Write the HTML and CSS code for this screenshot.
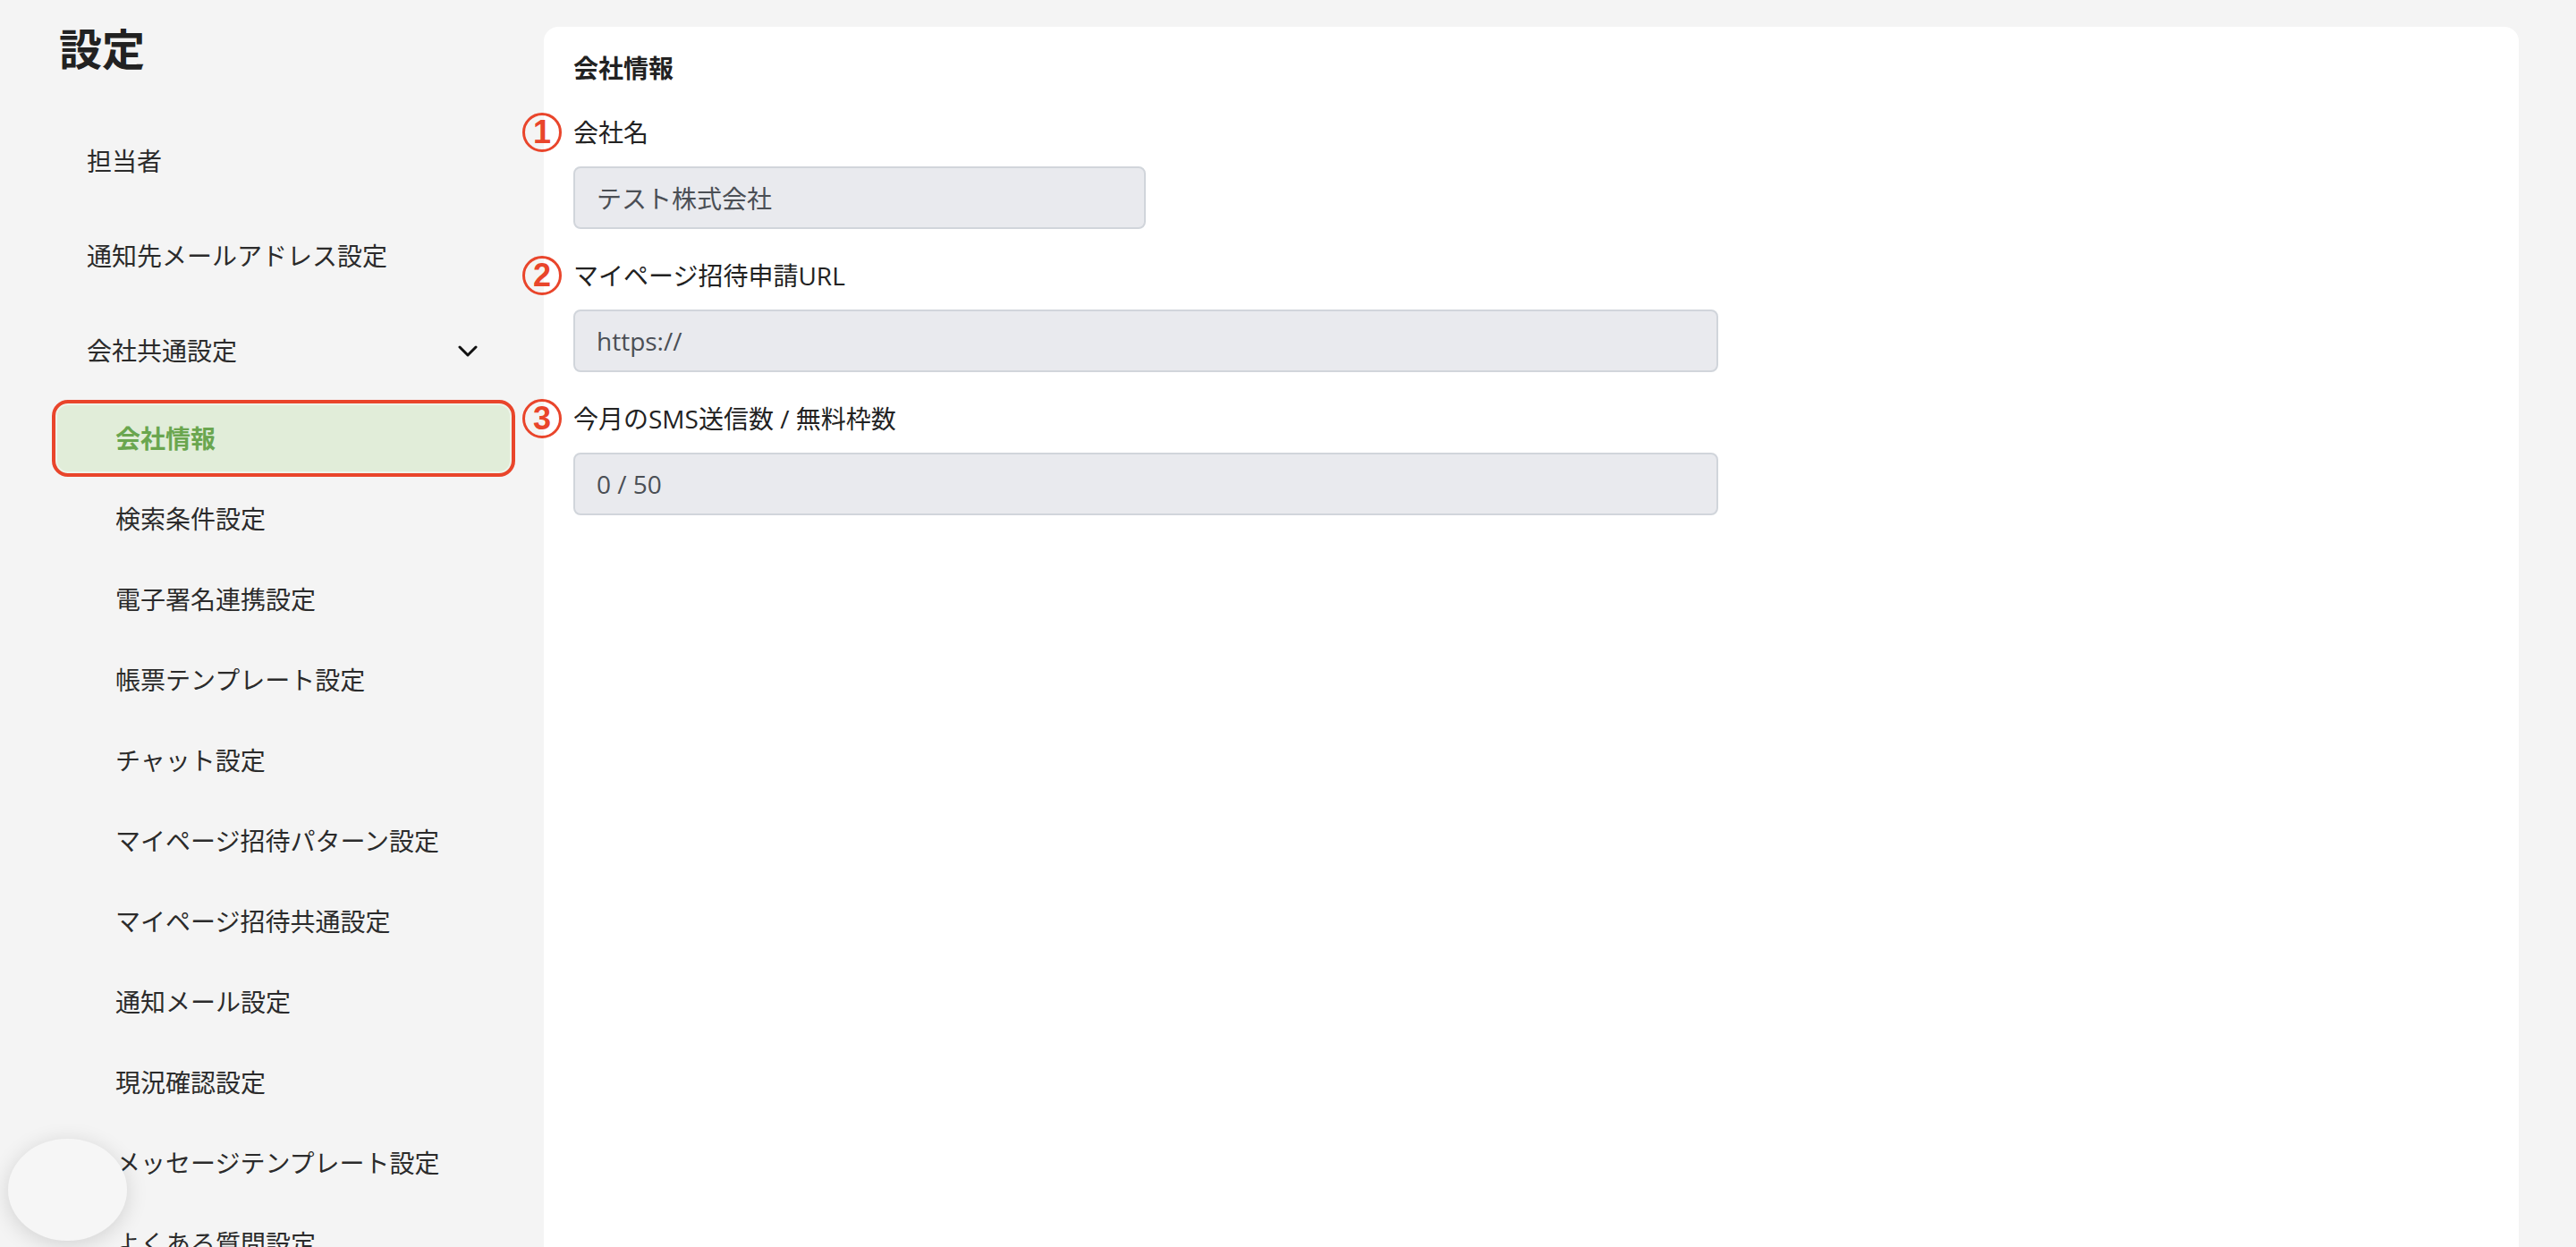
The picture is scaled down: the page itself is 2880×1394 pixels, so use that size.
FILE: index.html
```html
<!DOCTYPE html>
<html lang="ja">
<head>
<meta charset="utf-8">
<title>設定</title>
<link rel="stylesheet" href="styles.css">
</head>
<body>
<div class="layout">
  <aside class="sidebar">
    <h1 class="page-title">設定</h1>
    <nav class="nav">
      <a class="nav-item">担当者</a>
      <a class="nav-item">通知先メールアドレス設定</a>
      <div class="nav-item nav-group">
        <span>会社共通設定</span>
        <svg class="chevron" viewBox="0 0 22 13" width="22" height="13" aria-hidden="true"><path d="M2 2 L11 11 L20 2" fill="none" stroke="#111" stroke-width="3" stroke-linecap="round" stroke-linejoin="round"/></svg>
      </div>
      <ul class="sub-list">
        <li class="sub-item active">会社情報</li>
        <li class="sub-item">検索条件設定</li>
        <li class="sub-item">電子署名連携設定</li>
        <li class="sub-item">帳票テンプレート設定</li>
        <li class="sub-item">チャット設定</li>
        <li class="sub-item">マイページ招待パターン設定</li>
        <li class="sub-item">マイページ招待共通設定</li>
        <li class="sub-item">通知メール設定</li>
        <li class="sub-item">現況確認設定</li>
        <li class="sub-item">メッセージテンプレート設定</li>
        <li class="sub-item">よくある質問設定</li>
      </ul>
    </nav>
  </aside>
  <main class="main">
    <section class="card">
      <h2 class="card-title">会社情報</h2>
      <div class="field">
        <div class="field-label"><span class="marker">1</span>会社名</div>
        <div class="input input-short">テスト株式会社</div>
      </div>
      <div class="field">
        <div class="field-label"><span class="marker">2</span>マイページ招待申請URL</div>
        <div class="input input-long">https://</div>
      </div>
      <div class="field">
        <div class="field-label"><span class="marker">3</span>今月のSMS送信数 / 無料枠数</div>
        <div class="input input-long">0 / 50</div>
      </div>
    </section>
  </main>
</div>
<div class="fab"></div>
</body>
</html>
```

FILE: styles.css
```css
html, body {
  margin: 0;
  padding: 0;
  height: 100%;
  overflow: hidden;
}

body {
  background: #f4f4f4;
  font-family: "Open Sans", "Noto Sans CJK JP", "Noto Sans", sans-serif;
  color: #2a2a2a;
}

.layout {
  display: flex;
  height: 100vh;
}

.sidebar {
  width: 608px;
  flex: 0 0 608px;
  box-sizing: border-box;
  padding-top: 23px;
}

.page-title {
  margin: 0 0 40px 66px;
  font-size: 48px;
  line-height: 64px;
  font-weight: 700;
  color: #222;
}

.nav {
  margin: 0 32px 0 58px;
}

.nav-item {
  display: flex;
  align-items: center;
  justify-content: space-between;
  height: 106px;
  padding: 0 42px 0 39px;
  font-size: 28px;
  line-height: 40px;
  color: #2b2b2b;
}

.chevron {
  display: block;
}

.sub-list {
  list-style: none;
  margin: 2px 0 0 0;
  padding: 0;
  display: flex;
  flex-direction: column;
  gap: 4px;
}

.sub-item {
  box-sizing: border-box;
  height: 86px;
  display: flex;
  align-items: center;
  padding-left: 67px;
  border: 4px solid transparent;
  border-radius: 18px;
  font-size: 28px;
  line-height: 40px;
  color: #2b2b2b;
}

.sub-item.active {
  background: #e1edd9;
  border-color: #e9452b;
  box-shadow: inset 0 0 0 2px #eef4ea;
  color: #6aa64f;
  font-weight: 700;
}

.main {
  flex: 1;
  padding: 30px 64px 0 0;
  min-width: 0;
}

.card {
  background: #fff;
  border-radius: 16px 16px 0 0;
  padding: 26px 32px 32px 33px;
  min-height: 1500px;
  box-sizing: border-box;
}

.card-title {
  margin: 0 0 32px 0;
  font-size: 28px;
  line-height: 40px;
  font-weight: 700;
  color: #222;
}

.field {
  margin-bottom: 32px;
}

.field-label {
  position: relative;
  font-size: 28px;
  line-height: 40px;
  color: #222;
  margin-bottom: 18px;
}

.marker {
  position: absolute;
  right: calc(100% + 13px);
  top: -2px;
  width: 44px;
  height: 44px;
  box-sizing: border-box;
  border: 3px solid #e9452b;
  border-radius: 50%;
  display: flex;
  align-items: center;
  justify-content: center;
  font-family: "Liberation Sans", Arial, sans-serif;
  font-weight: 700;
  font-size: 36px;
  line-height: 1;
  color: #e9452b;
}

.input {
  box-sizing: border-box;
  height: 70px;
  display: flex;
  align-items: center;
  padding: 0 24px;
  background: #e9eaee;
  border: 2px solid #d1d5db;
  border-radius: 8px;
  font-size: 28px;
  color: #4b4f55;
}

.input-short {
  width: 640px;
}

.input-long {
  width: 1280px;
}

.fab {
  position: fixed;
  left: 9px;
  bottom: 7px;
  width: 133px;
  height: 114px;
  border-radius: 50%;
  background: #f6f6f6;
  box-shadow: 0 4px 24px rgba(0, 0, 0, 0.14);
}
```
